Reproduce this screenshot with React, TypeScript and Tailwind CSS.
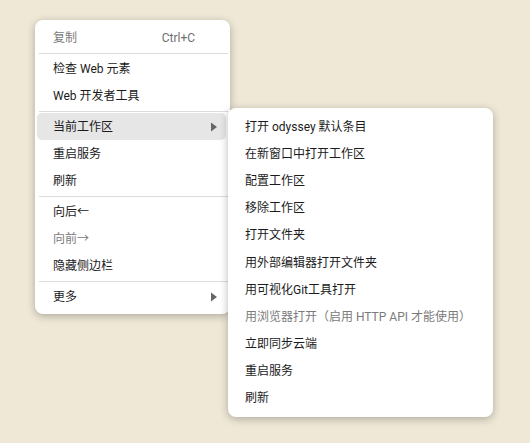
import React from "react";

type Item =
  | { type: "divider" }
  | { type: "item"; label: string; shortcut?: string; disabled?: boolean; submenu?: boolean; active?: boolean };

const mainItems: Item[] = [
  { type: "item", label: "复制", shortcut: "Ctrl+C", disabled: true },
  { type: "divider" },
  { type: "item", label: "检查 Web 元素" },
  { type: "item", label: "Web 开发者工具" },
  { type: "divider" },
  { type: "item", label: "当前工作区", submenu: true, active: true },
  { type: "item", label: "重启服务" },
  { type: "item", label: "刷新" },
  { type: "divider" },
  { type: "item", label: "向后←" },
  { type: "item", label: "向前→", disabled: true },
  { type: "item", label: "隐藏侧边栏" },
  { type: "divider" },
  { type: "item", label: "更多", submenu: true },
];

const subItems: { label: string; disabled?: boolean }[] = [
  { label: "打开 odyssey 默认条目" },
  { label: "在新窗口中打开工作区" },
  { label: "配置工作区" },
  { label: "移除工作区" },
  { label: "打开文件夹" },
  { label: "用外部编辑器打开文件夹" },
  { label: "用可视化Git工具打开" },
  { label: "用浏览器打开（启用 HTTP API 才能使用）", disabled: true },
  { label: "立即同步云端" },
  { label: "重启服务" },
  { label: "刷新" },
];

const font = {
  fontFamily: 'Roboto, "Noto Sans CJK SC", sans-serif',
};

function Arrow() {
  return (
    <svg width="6" height="10" viewBox="0 0 6 10" className="shrink-0">
      <path d="M0 0.5 L6 5 L0 9.5 Z" fill="#666666" />
    </svg>
  );
}

function SubMenu() {
  return (
    <div className="absolute left-[193px] top-[-5px] w-[265px] rounded-[8px] bg-white py-[5px] shadow-[0_2px_8px_rgba(0,0,0,0.28)] z-10">
      {subItems.map((s, i) => (
        <div
          key={i}
          className={`flex h-[27.2px] items-center pl-[17px] text-[12px] whitespace-nowrap ${
            s.disabled ? "text-[#7b7b7b]" : "text-[#1b1b1b]"
          }`}
        >
          {s.label}
        </div>
      ))}
    </div>
  );
}

export default function App() {
  return (
    <div className="relative h-screen w-full overflow-hidden bg-[#efe8d7]" style={font}>
      <div className="absolute left-[35px] top-[20px] w-[195px] rounded-[8px] bg-white py-[4px] shadow-[0_2px_8px_rgba(0,0,0,0.28)]">
        {mainItems.map((it, i) =>
          it.type === "divider" ? (
            <div key={i} className="ml-[4px] mr-[2px] mt-[2px] mb-[1px] h-px bg-[#dcdcdc]" />
          ) : (
            <div key={i} className="relative h-[27px] pl-[2px] pr-[4px]">
              <div
                className={`flex h-full items-center rounded-[5px] pl-[16px] pr-[9px] text-[12px] whitespace-nowrap ${
                  it.active ? "bg-[#e6e6e6]" : ""
                } ${it.disabled ? "text-[#7b7b7b]" : "text-[#1b1b1b]"}`}
              >
                <span className="flex-1">{it.label}</span>
                {it.shortcut && <span className="mr-[22px] text-[#6f6f6f]">{it.shortcut}</span>}
                {it.submenu && <Arrow />}
              </div>
              {it.active && <SubMenu />}
            </div>
          )
        )}
      </div>
    </div>
  );
}
